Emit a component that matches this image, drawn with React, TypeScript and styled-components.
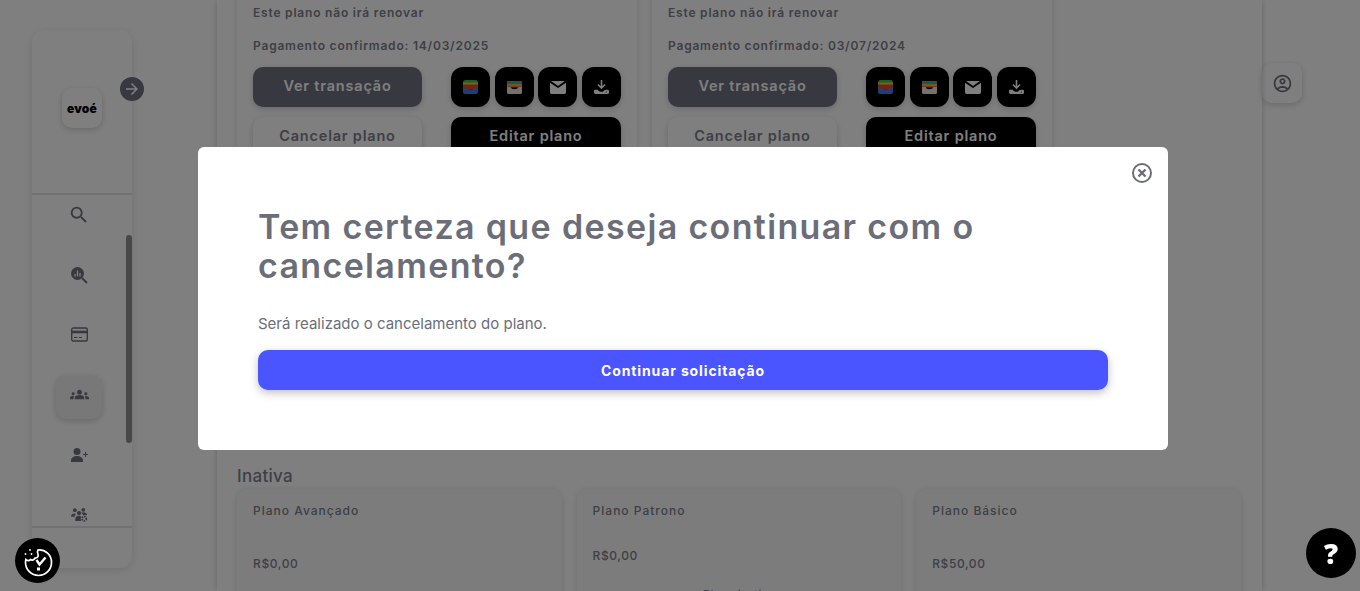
import React from "react";
import styled, { createGlobalStyle } from "styled-components";
import { MdArrowForward, MdGroups, MdOutlineAccountCircle, MdSearch } from "react-icons/md";

const display = `Inter, "Liberation Sans", sans-serif`;

const Global = createGlobalStyle`
  html, body {
    margin: 0;
    height: 591px;
    overflow: hidden;
    background: #ffffff;
    font-family: ${display};
  }
  * { box-sizing: border-box; }
`;

const Shell = styled.div`
  display: flex;
  width: 1360px;
  height: 591px;
  overflow: hidden;
`;

const SideColumn = styled.aside`
  flex: 0 0 217px;
  padding: 30px 0 0 32px;
`;

const SideCard = styled.div`
  position: relative;
  width: 100px;
  height: 538px;
  border-radius: 12px;
  box-shadow: 0 2px 8px rgba(0, 0, 0, 0.12);
  display: flex;
  flex-direction: column;
`;

const SideTop = styled.div`
  height: 165px;
  padding-top: 58px;
  display: flex;
  justify-content: center;
  align-items: flex-start;
  border-bottom: 2px solid #e2e2e4;
`;

const LogoTile = styled.div`
  width: 40px;
  height: 40px;
  border-radius: 10px;
  box-shadow: 0 2px 6px rgba(0, 0, 0, 0.18);
  display: flex;
  align-items: center;
  justify-content: center;
  font-weight: 900;
  font-size: 12px;
  color: #000;
  letter-spacing: 0.2px;
`;

const ExpandButton = styled.div`
  position: absolute;
  left: 88px;
  top: 47px;
  width: 24px;
  height: 24px;
  border-radius: 50%;
  background: #6f7180;
  color: #ffffff;
  display: flex;
  align-items: center;
  justify-content: center;
  font-size: 18px;
`;

const NavList = styled.nav`
  position: relative;
  height: 333px;
  overflow: hidden;
  display: flex;
  flex-direction: column;
  align-items: center;
  padding: 0 6px 0 0;
  border-bottom: 2px solid #e2e2e4;
`;

const NavItem = styled.div<{ $active?: boolean }>`
  flex: 0 0 44px;
  width: 46px;
  margin-bottom: 16px;
  padding-bottom: 5px;
  border-radius: 10px;
  display: flex;
  align-items: center;
  justify-content: center;
  color: #70727f;
  font-size: ${(p) => (p.$active ? "19px" : "22px")};
  background: ${(p) => (p.$active ? "#f0f0f0" : "transparent")};
  box-shadow: ${(p) => (p.$active ? "0 2px 6px rgba(0,0,0,0.18)" : "none")};
`;

const ScrollThumb = styled.div`
  position: absolute;
  right: 0;
  top: 40px;
  width: 6px;
  height: 208px;
  border-radius: 3px;
  background: #909090;
`;

const Main = styled.main`
  flex: 0 0 1045px;
  height: 591px;
  padding: 0 20px;
  box-shadow: 0 0 6px rgba(0, 0, 0, 0.2);
  overflow: hidden;
`;

const ActivePlans = styled.section`
  display: flex;
  gap: 15px;
  height: 519px;
  margin-top: -60px;
  margin-bottom: 7px;
`;

const PlanCard = styled.article<{ $wide?: boolean }>`
  flex: 0 0 ${(p) => (p.$wide ? "400px" : "324.6px")};
  height: ${(p) => (p.$wide ? "300px" : "180px")};
  padding: ${(p) => (p.$wide ? "66px" : "15px")} 16px 0;
  border-radius: 10px;
  background: ${(p) => (p.$wide ? "#ffffff" : "#f9f9f9")};
  box-shadow: 0 1px 6px rgba(0, 0, 0, 0.14);
`;

const CardLine = styled.p`
  margin: 0 0 19px;
  font-size: 12px;
  line-height: 14px;
  font-weight: 600;
  letter-spacing: 0.8px;
  color: #7c7e8e;
`;

const ActionGrid = styled.div`
  display: grid;
  grid-template-columns: 169px 170px;
  column-gap: 29px;
  row-gap: 10px;
  margin-top: -5px;
`;

const IconRow = styled.div`
  display: flex;
  justify-content: space-between;
`;

const IconButton = styled.div`
  width: 39px;
  height: 40px;
  border-radius: 12px;
  background: #000;
  color: #fff;
  display: flex;
  align-items: center;
  justify-content: center;
  box-shadow: 0 2px 6px rgba(0, 0, 0, 0.18);
`;

const ActionButton = styled.div<{ $tone: "muted" | "light" | "dark" }>`
  height: 40px;
  padding-bottom: 3px;
  border-radius: 10px;
  display: flex;
  align-items: center;
  justify-content: center;
  font-size: 14.5px;
  font-weight: 600;
  letter-spacing: 0.8px;
  box-shadow: 0 2px 6px rgba(0, 0, 0, 0.18);
  background: ${(p) => (p.$tone === "muted" ? "#6f7180" : p.$tone === "dark" ? "#000" : "#fff")};
  color: ${(p) => (p.$tone === "light" ? "#7c7e8e" : "#fff")};
`;

const SectionTitle = styled.h2`
  margin: 0 0 3px;
  font-size: 17px;
  line-height: 20px;
  font-weight: 500;
  letter-spacing: 0.3px;
  color: #7c7e8e;
`;

const InactivePlans = styled.section`
  display: flex;
  gap: 15px;
`;

const PlanName = styled.div`
  font-size: 12px;
  line-height: 14px;
  font-weight: 500;
  letter-spacing: 1px;
  color: #7c7e8e;
`;

const PlanPrice = styled.div<{ $gap: number }>`
  margin-top: ${(p) => p.$gap}px;
  font-size: 12px;
  line-height: 14px;
  font-weight: 500;
  letter-spacing: 0.6px;
  color: #7c7e8e;
`;

const PlanNote = styled.div`
  margin-top: 25px;
  text-align: center;
  font-size: 12px;
  line-height: 14px;
  color: #7c7e8e;
`;

const RightColumn = styled.aside`
  flex: 0 0 98px;
  padding-top: 63px;
`;

const UserTile = styled.div`
  width: 40px;
  height: 40px;
  border-radius: 10px;
  box-shadow: 0 2px 6px rgba(0, 0, 0, 0.18);
  display: flex;
  align-items: center;
  justify-content: center;
  color: #70727f;
  font-size: 21px;
`;

const Overlay = styled.div`
  position: fixed;
  inset: 0;
  background: rgba(0, 0, 0, 0.5);
  display: flex;
  align-items: center;
  justify-content: center;
  padding: 6px 0 0 6px;
`;

const Modal = styled.div`
  position: relative;
  width: 970px;
  height: 303px;
  padding: 61px 60px 0;
  border-radius: 6px;
  background: #ffffff;
`;

const CloseButton = styled.div`
  position: absolute;
  top: 14px;
  right: 14px;
  width: 24px;
  height: 24px;
  color: #6b6e78;
`;

const ModalTitle = styled.h1`
  margin: 0 0 30px;
  font-size: 34px;
  line-height: 38.5px;
  font-weight: 600;
  letter-spacing: 1.35px;
  color: #6b6e78;
`;

const ModalText = styled.p`
  margin: 0 0 17px;
  font-size: 15px;
  line-height: 18px;
  color: #6b6e78;
`;

const PrimaryButton = styled.div`
  height: 40px;
  border-radius: 10px;
  background: #4a54ff;
  color: #ffffff;
  display: flex;
  align-items: center;
  justify-content: center;
  font-size: 14px;
  font-weight: 700;
  letter-spacing: 0.87px;
  box-shadow: 0 3px 8px rgba(0, 0, 0, 0.25);
`;

const CookieBadge = styled.div`
  position: fixed;
  left: 15px;
  top: 538px;
  width: 45px;
  height: 45px;
  border-radius: 50%;
  background: #000;
  display: flex;
  align-items: center;
  justify-content: center;
`;

const HelpBadge = styled.div`
  position: fixed;
  left: 1306px;
  top: 528px;
  width: 50px;
  height: 50px;
  border-radius: 50%;
  background: #000;
  color: #fff;
  display: flex;
  align-items: center;
  justify-content: center;
  font-family: "Open Sans", sans-serif;
  font-weight: 800;
  font-size: 28px;
`;

function StatsSearchIcon() {
  return (
    <svg width="18" height="18" viewBox="0 0 18 18" fill="none">
      <circle cx="7.500" cy="7.500" r="6.500" fill="currentColor" />
      <path d="M12 12l5 5" stroke="currentColor" strokeWidth="2" />
      <path d="M5 10.500V8M7.500 10.500V4.500M10 10.500V7" stroke="#ffffff" strokeWidth="1.300" />
    </svg>
  );
}

function CardIcon() {
  return (
    <svg width="17" height="15" viewBox="0 0 17 15" fill="none" stroke="currentColor">
      <rect x="0.700" y="1" width="15.600" height="13" rx="1.500" strokeWidth="1.400" />
      <path d="M1 5h15" strokeWidth="2.600" />
      <path d="M3 10.500h3.500M8 10.500h3" strokeWidth="1.200" />
    </svg>
  );
}

function PersonAddIcon() {
  return (
    <svg width="17" height="14" viewBox="0 0 17 14" fill="currentColor">
      <circle cx="6" cy="3.500" r="3.500" />
      <path d="M0 14v-1.500C0 9.500 3 8 6 8s6 1.500 6 4.500V14z" />
      <path d="M14 4h1v2h2v1h-2v2h-1V7h-2V6h2z" />
    </svg>
  );
}

function ManageGroupsIcon() {
  return (
    <svg width="17" height="15" viewBox="0 0 18 16" fill="currentColor">
      <circle cx="4" cy="3.400" r="2" />
      <circle cx="13" cy="3" r="2" />
      <circle cx="8.500" cy="6.500" r="2.300" />
      <path d="M0 10c0-2.400 2-3.200 4-3.200l1 .6C4 9 3.800 9.800 3.800 10.500H0z" />
      <path d="M4.500 15v-2c0-2.600 2-3.600 4-3.600 1 0 1.700.2 2.400.6-.7 1.400-.8 3.400-.1 5H4.500z" />
      <path d="M11 6.500c.6-.6 1.300-.8 2-.8 1.900 0 4 .9 4 3.100h-4c-.6-1-1.200-1.700-2-2.300z" />
      <circle cx="14" cy="12.500" r="2.300" fill="none" stroke="currentColor" strokeWidth="1.800" strokeDasharray="1.500 .9" />
    </svg>
  );
}

function GoogleWalletIcon() {
  return (
    <svg width="15" height="14" viewBox="0 0 15 14">
      <rect x="0" y="0" width="15" height="8" rx="2.500" fill="#3dbb4e" />
      <rect x="0" y="2.500" width="15" height="5" fill="#f9c02a" />
      <rect x="0" y="4.500" width="15" height="5" fill="#e8452f" />
      <path d="M0 7.500c3 0 4 2 7.500 2s4.500-2 7.500-2V12a2 2 0 0 1-2 2H2a2 2 0 0 1-2-2z" fill="#3d7fe8" />
    </svg>
  );
}

function AppleWalletIcon() {
  return (
    <svg width="15" height="13" viewBox="0 0 15 13">
      <rect x="0" y="0" width="15" height="2" fill="#3d9fe8" />
      <rect x="0" y="1.500" width="15" height="2" fill="#3dbb4e" />
      <rect x="0" y="3" width="15" height="2.500" fill="#f2a93b" />
      <rect x="0" y="5" width="15" height="1.500" fill="#e8705a" />
      <path d="M0 6h3.500c.8 1.600 2 2.200 4 2.200s3.200-.6 4-2.200H15v5.500a1.500 1.500 0 0 1-1.500 1.500h-12A1.500 1.500 0 0 1 0 11.500z" fill="#e8e4dc" />
    </svg>
  );
}

function MailIcon() {
  return (
    <svg width="16" height="13" viewBox="0 0 15 12" fill="#fff">
      <path d="M0 1.500 7.500 6.500 15 1.500V10.500a1.500 1.500 0 0 1-1.500 1.500h-12A1.500 1.500 0 0 1 0 10.500z" />
      <path d="M1 0h13L7.500 4.500z" />
    </svg>
  );
}

function DownloadIcon() {
  return (
    <svg width="15" height="15" viewBox="0 0 15 15" fill="#fff">
      <path d="M6.700 0h1.600v6.200l2.200-2.200 1.100 1.100-4.100 4.100-4.100-4.100 1.100-1.100 2.200 2.200z" />
      <path d="M0 11c0-.8.6-1.200 1.300-1.200h2.400c1 1.400 2 2 3.300 2h2c.6-1.200 2-2 3-2h1.500c.9 0 1.500.6 1.500 1.400v1.300c0 .8-.6 1.500-1.500 1.500H1.500C.6 14 0 13.400 0 12.600z" />
      <circle cx="12.300" cy="12" r=".6" fill="#000" />
    </svg>
  );
}

function CookieCheckIcon() {
  return (
    <svg width="32" height="32" viewBox="0 0 32 32" fill="none" stroke="#fff" strokeWidth="1.700" strokeLinecap="round">
      <path d="M16 5c7.500-.6 13.500 5 13.500 12.500A13 13 0 0 1 16.500 30.500 13 13 0 0 1 3.500 17.500c0-1.200.2-2.200.4-3 1.200 1.400 3.400 1.400 4.600.1 1.500.9 3.700.4 4.500-1.500 2.200.2 3.900-1.700 3-3.700-.6-1.200-.6-3.200 0-4.400z" />
      <path d="M14.500 15l3 4.500 6-7" strokeWidth="2.300" strokeLinecap="butt" />
      <rect x="15" y="22.500" width="3" height="3" fill="#fff" stroke="none" />
      <circle cx="8" cy="5" r=".9" fill="#fff" stroke="none" />
      <circle cx="3.500" cy="9" r=".9" fill="#fff" stroke="none" />
      <circle cx="9.500" cy="9" r=".9" fill="#fff" stroke="none" />
    </svg>
  );
}

function CloseIcon() {
  return (
    <svg width="24" height="24" viewBox="0 0 24 24" fill="none" stroke="currentColor">
      <circle cx="12" cy="12" r="9" strokeWidth="2" />
      <path d="M8.500 8.500l7 7M15.500 8.500l-7 7" strokeWidth="2.400" />
    </svg>
  );
}

function ActivePlanCard({ date }: { date: string }) {
  return (
    <PlanCard $wide>
      <CardLine>Este plano não irá renovar</CardLine>
      <CardLine>Pagamento confirmado: {date}</CardLine>
      <ActionGrid>
        <ActionButton $tone="muted">Ver transação</ActionButton>
        <IconRow>
          <IconButton><GoogleWalletIcon /></IconButton>
          <IconButton><AppleWalletIcon /></IconButton>
          <IconButton><MailIcon /></IconButton>
          <IconButton><DownloadIcon /></IconButton>
        </IconRow>
        <ActionButton $tone="light">Cancelar plano</ActionButton>
        <ActionButton $tone="dark">Editar plano</ActionButton>
      </ActionGrid>
    </PlanCard>
  );
}

export default function App() {
  return (
    <>
      <Global />
      <Shell>
        <SideColumn>
          <SideCard>
            <SideTop>
              <LogoTile>evoé</LogoTile>
            </SideTop>
            <ExpandButton><MdArrowForward /></ExpandButton>
            <NavList>
              <NavItem><MdSearch /></NavItem>
              <NavItem><StatsSearchIcon /></NavItem>
              <NavItem><CardIcon /></NavItem>
              <NavItem $active><MdGroups /></NavItem>
              <NavItem><PersonAddIcon /></NavItem>
              <NavItem><ManageGroupsIcon /></NavItem>
              <ScrollThumb />
            </NavList>
          </SideCard>
        </SideColumn>
        <Main>
          <ActivePlans>
            <ActivePlanCard date="14/03/2025" />
            <ActivePlanCard date="03/07/2024" />
          </ActivePlans>
          <SectionTitle>Inativa</SectionTitle>
          <InactivePlans>
            <PlanCard>
              <PlanName>Plano Avançado</PlanName>
              <PlanPrice $gap={39}>R$0,00</PlanPrice>
            </PlanCard>
            <PlanCard>
              <PlanName>Plano Patrono</PlanName>
              <PlanPrice $gap={31}>R$0,00</PlanPrice>
              <PlanNote>Plano inativo</PlanNote>
            </PlanCard>
            <PlanCard>
              <PlanName>Plano Básico</PlanName>
              <PlanPrice $gap={39}>R$50,00</PlanPrice>
            </PlanCard>
          </InactivePlans>
        </Main>
        <RightColumn>
          <UserTile><MdOutlineAccountCircle /></UserTile>
        </RightColumn>
      </Shell>
      <Overlay>
        <Modal>
          <CloseButton><CloseIcon /></CloseButton>
          <ModalTitle>Tem certeza que deseja continuar com o cancelamento?</ModalTitle>
          <ModalText>Será realizado o cancelamento do plano.</ModalText>
          <PrimaryButton>Continuar solicitação</PrimaryButton>
        </Modal>
      </Overlay>
      <CookieBadge><CookieCheckIcon /></CookieBadge>
      <HelpBadge>?</HelpBadge>
    </>
  );
}
